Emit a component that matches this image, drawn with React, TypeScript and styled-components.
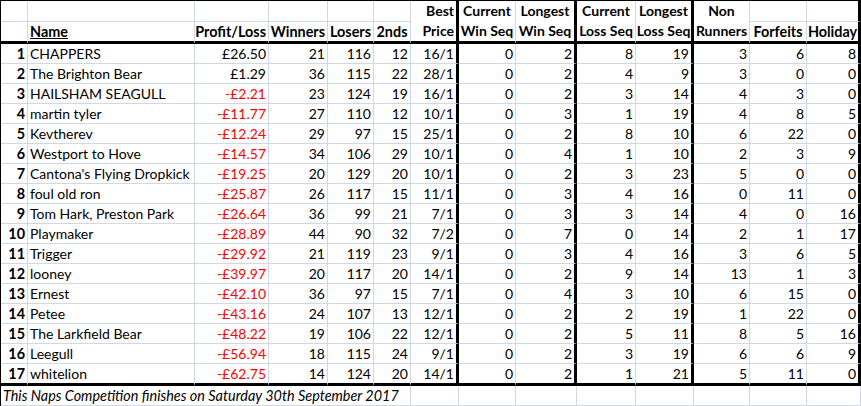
import React from 'react'
import styled, { createGlobalStyle } from 'styled-components'

const GRID = '#d0d7e5'
const INK = '#000000'
const RED = '#ff0000'

// column widths include each cell's right border
const widths = [27, 167, 74, 59, 46, 37, 48, 57, 61, 59, 58, 56, 57, 54]
const thickCols = [6, 8, 10, 13]

type Align = 'left' | 'right' | 'center'

const GlobalStyle = createGlobalStyle`
  html, body {
    margin: 0;
    padding: 0;
    background: #ffffff;
  }
  body {
    font-family: Lato, 'Liberation Sans', sans-serif;
  }
`

const Sheet = styled.div`
  display: grid;
  grid-template-columns: ${widths.map(w => `${w}px`).join(' ')};
  grid-template-rows: 21px 22px repeat(16, 20px) 22px 20px;
  width: 861px;
  box-sizing: border-box;
  border-top: 1px solid ${INK};
  border-left: 1px solid ${INK};
  font-size: 14px;
  color: ${INK};
`

const Cell = styled.div<{
  $align?: Align
  $thickRight?: boolean
  $thickBottom?: boolean
  $bold?: boolean
  $red?: boolean
  $italic?: boolean
  $rows?: number
  $cols?: number
}>`
  box-sizing: border-box;
  display: flex;
  align-items: center;
  justify-content: ${({ $align }) =>
    $align === 'right' ? 'flex-end' : $align === 'center' ? 'center' : 'flex-start'};
  padding: 0 2px 0 2px;
  white-space: nowrap;
  line-height: 19px;
  border-right: ${({ $thickRight }) => ($thickRight ? `3px solid ${INK}` : `1px solid ${GRID}`)};
  border-bottom: ${({ $thickBottom }) => ($thickBottom ? `3px solid ${INK}` : `1px solid ${GRID}`)};
  font-weight: ${({ $bold }) => ($bold ? 700 : 400)};
  font-size: ${({ $bold, $italic }) => ($bold ? '14.4px' : $italic ? '14.4px' : '14px')};
  font-style: ${({ $italic }) => ($italic ? 'italic' : 'normal')};
  color: ${({ $red }) => ($red ? RED : INK)};
  grid-row: span ${({ $rows }) => $rows ?? 1};
  grid-column: span ${({ $cols }) => $cols ?? 1};
`

const HeadLines = styled.div<{ $align: Align }>`
  display: flex;
  flex-direction: column;
  align-items: ${({ $align }) => ($align === 'right' ? 'flex-end' : 'center')};
  width: 100%;
  font-size: 14px;
  line-height: 20px;
`

const Underlined = styled.span`
  text-decoration: underline;
`

type Row = [string, string, number, number, number, string, number, number, number, number, number, number, number]

const rows: Row[] = [
  ['CHAPPERS', '£26.50', 21, 116, 12, '16/1', 0, 2, 8, 19, 3, 6, 8],
  ['The Brighton Bear', '£1.29', 36, 115, 22, '28/1', 0, 2, 4, 9, 3, 0, 0],
  ['HAILSHAM SEAGULL', '-£2.21', 23, 124, 19, '16/1', 0, 2, 3, 14, 4, 3, 0],
  ['martin tyler', '-£11.77', 27, 110, 12, '10/1', 0, 3, 1, 19, 4, 8, 5],
  ['Kevtherev', '-£12.24', 29, 97, 15, '25/1', 0, 2, 8, 10, 6, 22, 0],
  ['Westport to Hove', '-£14.57', 34, 106, 29, '10/1', 0, 4, 1, 10, 2, 3, 9],
  ["Cantona's Flying Dropkick", '-£19.25', 20, 129, 20, '10/1', 0, 2, 3, 23, 5, 0, 0],
  ['foul old ron', '-£25.87', 26, 117, 15, '11/1', 0, 3, 4, 16, 0, 11, 0],
  ['Tom Hark, Preston Park', '-£26.64', 36, 99, 21, '7/1', 0, 3, 3, 14, 4, 0, 16],
  ['Playmaker', '-£28.89', 44, 90, 32, '7/2', 0, 7, 0, 14, 2, 1, 17],
  ['Trigger', '-£29.92', 21, 119, 23, '9/1', 0, 3, 4, 16, 3, 6, 5],
  ['looney', '-£39.97', 20, 117, 20, '14/1', 0, 2, 9, 14, 13, 1, 3],
  ['Ernest', '-£42.10', 36, 97, 15, '7/1', 0, 4, 3, 10, 6, 15, 0],
  ['Petee', '-£43.16', 24, 107, 13, '12/1', 0, 2, 2, 19, 1, 22, 0],
  ['The Larkfield Bear', '-£48.22', 19, 106, 22, '12/1', 0, 2, 5, 11, 8, 5, 16],
  ['Leegull', '-£56.94', 18, 115, 24, '9/1', 0, 2, 3, 19, 6, 6, 9],
  ['whitelion', '-£62.75', 14, 124, 20, '14/1', 0, 2, 1, 21, 5, 11, 0],
]

// two-line headers that fill both header rows
const stacked: { top: string; bottom: string; align: Align }[] = [
  { top: 'Best', bottom: 'Price', align: 'right' },
  { top: 'Current', bottom: 'Win Seq', align: 'center' },
  { top: 'Longest', bottom: 'Win Seq', align: 'center' },
  { top: 'Current', bottom: 'Loss Seq', align: 'center' },
  { top: 'Longest', bottom: 'Loss Seq', align: 'center' },
  { top: 'Non', bottom: 'Runners', align: 'center' },
]

const lowerHeads: { label: React.ReactNode; align: Align }[] = [
  { label: '', align: 'right' },
  { label: <Underlined>Name</Underlined>, align: 'left' },
  { label: 'Profit/Loss', align: 'right' },
  { label: 'Winners', align: 'right' },
  { label: 'Losers', align: 'right' },
  { label: '2nds', align: 'center' },
]

const isThick = (col: number) => thickCols.includes(col)

export default function App() {
  return (
    <>
      <GlobalStyle />
      <Sheet>
        {/* header row 1 */}
        {[0, 1, 2, 3, 4, 5].map(col => (
          <Cell key={`h1-${col}`} />
        ))}
        {stacked.map((h, i) => (
          <Cell
            key={`hs-${i}`}
            $rows={2}
            $bold
            $align={h.align}
            $thickBottom
            $thickRight={isThick(6 + i)}>
            <HeadLines $align={h.align}>
              <span>{h.top}</span>
              <span>{h.bottom}</span>
            </HeadLines>
          </Cell>
        ))}
        <Cell />
        <Cell $thickRight />

        {/* header row 2 */}
        {lowerHeads.map((h, col) => (
          <Cell key={`h2-${col}`} $bold $align={h.align} $thickBottom>
            {h.label}
          </Cell>
        ))}
        <Cell $bold $align='center' $thickBottom>
          Forfeits
        </Cell>
        <Cell $bold $align='center' $thickBottom $thickRight>
          Holiday
        </Cell>

        {/* data */}
        {rows.map((row, r) => {
          const last = r === rows.length - 1
          const [name, profit, ...rest] = row
          return (
            <React.Fragment key={name}>
              <Cell $bold $align='right' $thickBottom={last}>
                {r + 1}
              </Cell>
              <Cell $align='left' $thickBottom={last}>
                {name}
              </Cell>
              <Cell $align='right' $red={profit.startsWith('-')} $thickBottom={last}>
                {profit}
              </Cell>
              {rest.map((v, i) => (
                <Cell key={i} $align='right' $thickBottom={last} $thickRight={isThick(3 + i)}>
                  {v}
                </Cell>
              ))}
            </React.Fragment>
          )
        })}

        {/* footer */}
        <Cell $cols={6} $italic $align='left'>
          This Naps Competition finishes on Saturday 30th September 2017
        </Cell>
        {[6, 7, 8, 9, 10, 11, 12, 13].map(col => (
          <Cell key={`f-${col}`} />
        ))}
      </Sheet>
    </>
  )
}
